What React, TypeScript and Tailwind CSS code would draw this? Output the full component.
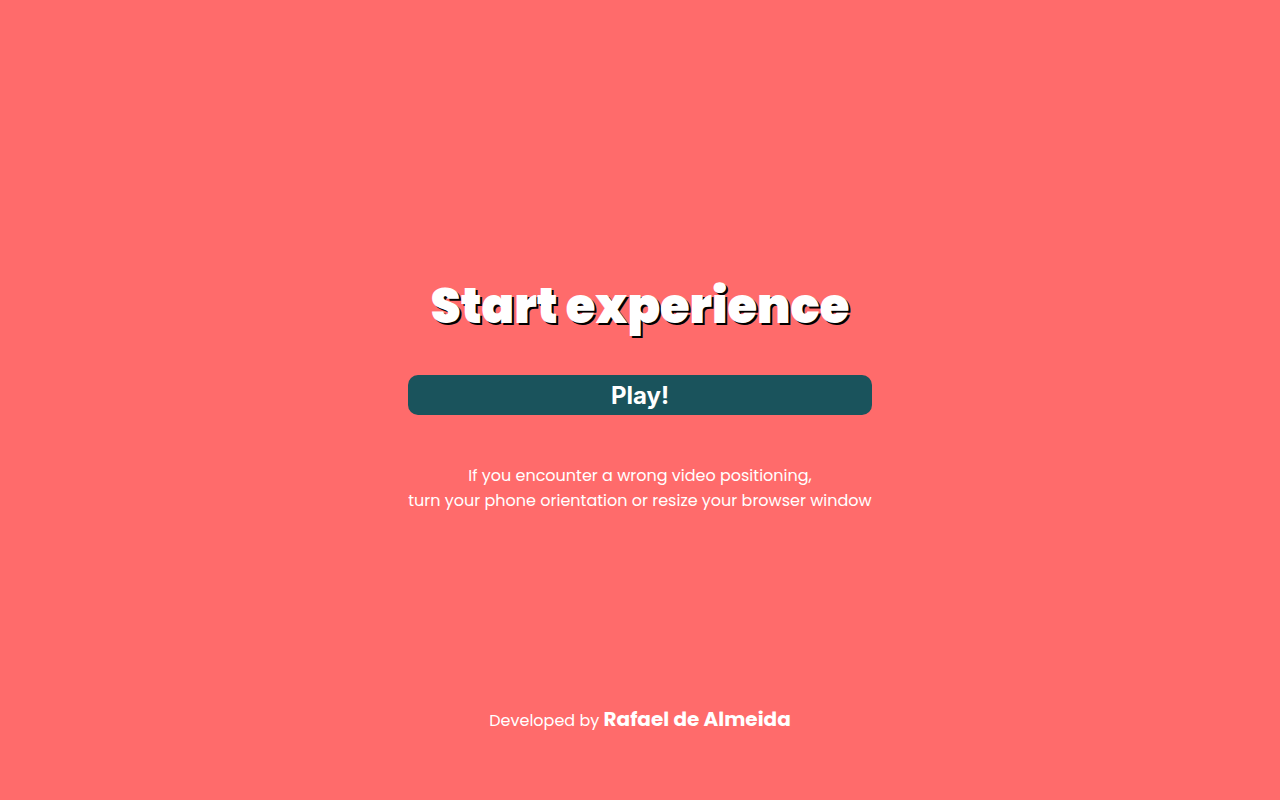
export default function App() {
  return (
    <div className="flex min-h-screen flex-col bg-[#ff6b6b] px-4 font-['Poppins','Inter',sans-serif] text-white">
      <main className="flex flex-1 flex-col items-center justify-center pt-[79px]">
        <div className="flex flex-col text-center">
          <h1 className="text-5xl leading-[72px] font-black [text-shadow:2px_2px_0_#000]">
            Start experience
          </h1>
          <button
            type="button"
            className="mt-8 h-10 cursor-pointer rounded-[10px] bg-[#1a535c] pt-0.5 font-['Inter',sans-serif] text-2xl font-bold"
          >
            Play!
          </button>
          <p className="mt-12 text-base leading-[25px]">
            If you encounter a wrong video positioning,
            <br />
            turn your phone orientation or resize your browser window
          </p>
        </div>
      </main>
      <footer className="pb-[63px] text-center text-base leading-8">
        Developed by{" "}
        <a href="#author" className="text-xl font-bold">
          Rafael de Almeida
        </a>
      </footer>
    </div>
  );
}
